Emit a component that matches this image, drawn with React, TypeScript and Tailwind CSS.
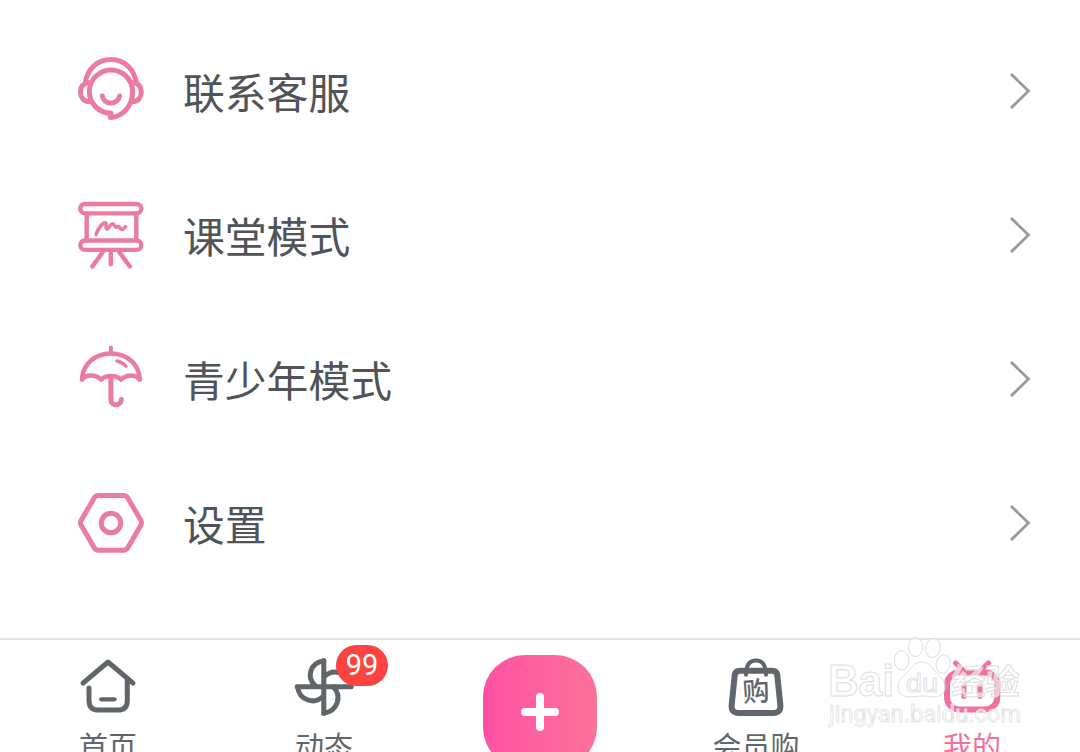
import type { ReactNode } from "react";

const menuItems = [
  { label: "联系客服", icon: <SupportIcon /> },
  { label: "课堂模式", icon: <BoardIcon /> },
  { label: "青少年模式", icon: <UmbrellaIcon /> },
  { label: "设置", icon: <SettingsIcon /> }
];

export default function App() {
  return (
    <div className="relative flex h-[752px] w-[1080px] flex-col overflow-hidden bg-white font-['Noto_Sans_CJK_SC',sans-serif]">
      <main className="h-[638px] shrink-0 pt-[19px]">
        {menuItems.map((item) => (
          <MenuRow key={item.label} label={item.label} icon={item.icon} />
        ))}
      </main>
      <nav className="grid h-[130px] shrink-0 grid-cols-5 border-t-2 border-[#e3e5e6] text-[#61666d]">
        <Tab label="首页" icon={<HomeIcon />} />
        <Tab label="动态" icon={<PinwheelIcon />} badge="99" />
        <div className="flex justify-center pt-[15px]">
          <button
            aria-label="发布"
            className="grid size-[114px] place-items-center rounded-[42px] bg-linear-to-r from-[#ff4fa3] to-[#fb7299]"
          >
            <svg className="size-[38px]" viewBox="0 0 38 38" stroke="#fff" strokeWidth="8" strokeLinecap="round">
              <path d="M19 4v30M4 19h30" />
            </svg>
          </button>
        </div>
        <Tab label="会员购" icon={<BagIcon />} />
        <Tab label="我的" icon={<TvIcon />} active />
      </nav>
      <Watermark />
    </div>
  );
}

function MenuRow({ label, icon }: { label: string; icon: ReactNode }) {
  return (
    <button className="flex h-36 w-full items-center pr-[48px] pl-[75px] text-left">
      {icon}
      <span className="ml-[36px] flex-1 pb-px text-[41.8px] leading-[60px] text-[#505357]">{label}</span>
      <svg className="h-[40px] w-[24px]" viewBox="0 0 24 40" fill="none" stroke="#999" strokeWidth="2.8">
        <path d="M3 3l17.5 17L3 37" />
      </svg>
    </button>
  );
}

function Tab({ label, icon, badge, active }: { label: string; icon: ReactNode; badge?: string; active?: boolean }) {
  return (
    <button className={active ? "flex flex-col items-center pt-[15px] text-[#f2719b]" : "flex flex-col items-center pt-[15px]"}>
      <span className="relative">
        {icon}
        {badge && (
          <span className="absolute -top-[10px] left-[48px] grid h-[41px] w-[52px] place-items-center rounded-full bg-[#fb4441] font-[Roboto,sans-serif] text-[29px] leading-none text-white">
            {badge}
          </span>
        )}
      </span>
      <span className="mt-[6px] text-[29px] leading-[40px]">{label}</span>
    </button>
  );
}

function MenuIcon({ children, strokeWidth = 5 }: { children: ReactNode; strokeWidth?: number }) {
  return (
    <svg
      className="size-[72px] shrink-0"
      viewBox="0 0 72 72"
      fill="none"
      stroke="#ec7ba2"
      strokeWidth={strokeWidth}
      strokeLinecap="round"
      strokeLinejoin="round"
    >
      {children}
    </svg>
  );
}

function TabIcon({ children }: { children: ReactNode }) {
  return (
    <svg
      className="h-[64px] w-[72px]"
      viewBox="0 0 72 64"
      fill="none"
      stroke="currentColor"
      strokeWidth="5"
      strokeLinecap="round"
      strokeLinejoin="round"
    >
      {children}
    </svg>
  );
}

function SupportIcon() {
  return (
    <MenuIcon>
      <path d="M36 58.2A21.6 21.6 0 1 1 57.6 36.7C57.6 51 48 61.5 35.3 62.5L34.8 58" />
      <path d="M10.2 28C12.5 13.5 22.5 4.6 35.8 4.6S59.1 13.5 61.4 28" />
      <path d="M13.5 27.6C8 28.4 5.4 32 5.4 37s2.8 9.3 8.8 9.7M58.3 27.6c5.4.8 8 4.4 8 9.4s-2.8 9.3-8.8 9.7" />
      <path d="M27.4 41c1 4.6 4.2 7 8.4 7s7.7-2.4 8.8-7" />
    </MenuIcon>
  );
}

function BoardIcon() {
  return (
    <MenuIcon strokeWidth={4.4}>
      <rect x="5.3" y="5" width="61" height="9.4" rx="4.7" />
      <rect x="5.3" y="41.5" width="61" height="9.4" rx="4.7" />
      <path d="M11.7 14.4v27M61.3 14.4v27" />
      <path d="M28 52.8L17.4 67.4M35.8 52v13.2M44 52.8L54.8 67.4" />
      <path
        d="M21 35.5C23.5 29 27.5 23.8 30 23.8c2.8 0-.5 6 2 6.2 2 .2 3-5.3 5.6-5.3 2.400 0 2.200 5.200 5 3 2.200-1.500 2.500 3.500 4.700 2.800 1.400-.5 1.900-1.500 3.200-2.900"
        strokeWidth="3.6"
      />
    </MenuIcon>
  );
}

function UmbrellaIcon() {
  return (
    <MenuIcon>
      <path d="M35.9 4.5v6" strokeWidth="4" />
      <path
        d="M7 36.7C7.5 21 20 10.6 35.9 10.6S64.3 21 64.8 36.7C60.5 31.2 51.5 31 46 36.7c-4.5-4.8-15.2-4.8-19.8 0C20.5 31 11.3 31.2 7 36.7Z"
        strokeWidth="4.5"
      />
      <path d="M35.9 33.5v22.7c0 7.4 10 7.2 10.5.2" />
      <path d="M42 18c3.7.8 6.2 2.2 8.8 5" strokeWidth="3.4" />
    </MenuIcon>
  );
}

function SettingsIcon() {
  return (
    <MenuIcon>
      <path d="M23.5 8.4h25c2 0 3.3.8 4.3 2.5L65.8 33.2c1 1.8 1 3.2 0 5L52.8 60.8c-1 1.7-2.3 2.5-4.3 2.5h-25c-2 0-3.3-.8-4.3-2.5L6.2 38.2c-1-1.8-1-3.2 0-5l13-22.3c1-1.7 2.3-2.5 4.3-2.5Z" />
      <circle cx="36" cy="36" r="9.7" />
    </MenuIcon>
  );
}

function HomeIcon() {
  return (
    <TabIcon>
      <path d="M11 28.2L36 7l25 21.2" />
      <path d="M17 33v12.5c0 6.3 3.2 9.6 9.5 9.6h19.3c6.3 0 9.5-3.3 9.5-9.6V24" />
      <path d="M29.2 44.3h13.4" strokeWidth="4.2" />
    </TabIcon>
  );
}

function PinwheelIcon() {
  return (
    <TabIcon>
      <path d="M35.8 5.8v52.5M9.2 31.8h54" />
      <path d="M35.8 5.8C22 8.2 18 22 27.3 30.8M9.6 32c1.8 13.500 16.700 17.800 25.400 9.500M35.8 58.2c14-2 18.3-17 9.8-26.2M36.2 21.8c8.8-9 24.6-4.8 26.6 9" />
    </TabIcon>
  );
}

function BagIcon() {
  return (
    <TabIcon>
      <path
        d="M20 15.8h32c3.2 0 4.9 1.500 5.300 4.600l3 29.400c.6 5.500-1.500 8.200-6.900 8.200H18.600c-5.400 0-7.500-2.700-6.900-8.200l3-29.400c.4-3.100 2.100-4.600 5.300-4.600Z"
        strokeWidth="6"
      />
      <path d="M26 19.8c0-9.2 3.5-14.3 10-14.3s10 5.1 10 14.3" strokeWidth="4" />
      <text x="22.5" y="46" fontSize="27" fontWeight="500" fill="currentColor" stroke="none" transform="rotate(-4 36 36)">
        购
      </text>
    </TabIcon>
  );
}

function TvIcon() {
  return (
    <TabIcon>
      <rect x="11" y="17.5" width="50.3" height="37" rx="12" strokeWidth="6" />
      <path d="M19.5 8l8.5 8M52.5 8L44 16" />
      <path d="M28 31v10.5M44 31v10.5" />
    </TabIcon>
  );
}

function Watermark() {
  return (
    <svg
      className="pointer-events-none absolute top-[625px] left-[815px] h-[127px] w-[225px] font-['Liberation_Sans','Noto_Sans_CJK_SC',sans-serif]"
      viewBox="0 0 225 127"
      fill="#fff"
      fillOpacity="0.6"
      stroke="#dedede"
      strokeWidth="1"
    >
      <ellipse cx="86.7" cy="35.3" rx="7.3" ry="9.7" />
      <ellipse cx="100.5" cy="22" rx="7.2" ry="9.5" />
      <ellipse cx="118" cy="23" rx="7.4" ry="9.6" transform="rotate(8 118 23)" />
      <ellipse cx="128.2" cy="39" rx="7" ry="9.3" transform="rotate(12 128 39)" />
      <path d="M107 37c7 0 9.500 4.500 12.500 8.500 4 5 10.500 8.500 10.500 16.500 0 8-6.500 10.800-13.500 9.800-7-1-12-1-18 0-7 1-15-1-15.500-9.300-.5-8 6-11 11-17 4-4.500 6-8.500 13-8.500Z" />
      <text x="13" y="71" fontSize="44" fontWeight="700" textLength="66" lengthAdjust="spacingAndGlyphs">
        Bai
      </text>
      <text x="91" y="67" fontSize="25" textLength="32" lengthAdjust="spacingAndGlyphs" strokeWidth="0.9">
        du
      </text>
      <text x="136.500" y="68.500" fontSize="34" fontWeight="700">
        经验
      </text>
      <text
        x="14"
        y="97"
        fontSize="23.500"
        textLength="192"
        lengthAdjust="spacingAndGlyphs"
        className="font-[Roboto,sans-serif]"
        stroke="#e3e3e3"
        strokeWidth="0.8"
      >
        jingyan.baidu.com
      </text>
    </svg>
  );
}
